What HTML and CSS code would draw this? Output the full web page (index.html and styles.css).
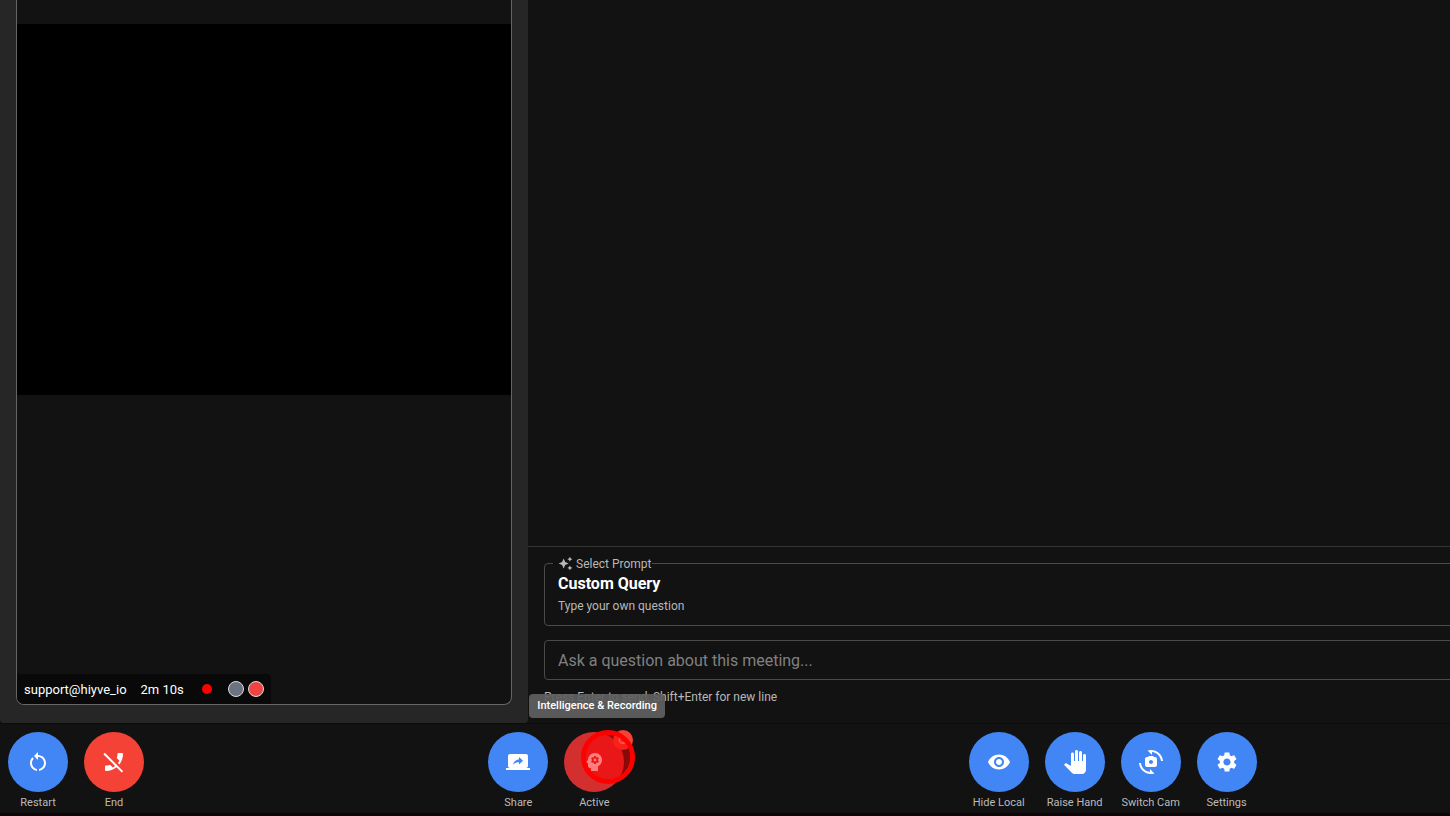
FILE: index.html
```html
<!DOCTYPE html>
<html lang="en">
<head>
  <meta charset="UTF-8" />
  <meta name="viewport" content="width=device-width, initial-scale=1.0"/>
  <title>Meeting</title>
  <link rel="stylesheet" href="styles.css">
</head>
<body>

<div class="room">
  <main class="stage">
    <section class="video-pane">
      <div class="tile">
        <div class="video"></div>
        <div class="tile-info">
          <span>support@hiyve_io</span>
          <span class="elapsed">2m 10s</span>
          <span class="rec-dot"></span>
          <span class="status muted"></span>
          <span class="status live"></span>
        </div>
      </div>
    </section>

    <section class="assistant">
      <div class="answers"></div>
      <form class="query">
        <fieldset class="prompt">
          <legend class="prompt-label">
            <svg viewBox="0 0 24 24"><path d="m19 9 1.25-2.75L23 5l-2.75-1.25L19 1l-1.25 2.75L15 5l2.75 1.25zm-7.5.5L9 4 6.5 9.5 1 12l5.5 2.5L9 20l2.5-5.5L17 12zM19 15l-1.25 2.75L15 19l2.75 1.25L19 23l1.25-2.75L23 19l-2.75-1.25z"/></svg>
            <span>Select Prompt</span>
          </legend>
          <button type="button" class="prompt-select" aria-haspopup="listbox">
            <span class="prompt-name">Custom Query</span>
            <span class="prompt-hint">Type your own question</span>
          </button>
        </fieldset>
        <input class="question" type="text" placeholder="Ask a question about this meeting..." aria-label="Ask a question about this meeting">
        <p class="help">Press Enter to send, Shift+Enter for new line</p>
      </form>
    </section>
  </main>

  <footer class="toolbar">
    <div class="group">
      <div class="control">
        <button type="button" class="round" id="restart" aria-labelledby="restart-label">
          <svg viewBox="0 0 24 24"><path d="M12 5V2L8 6l4 4V7c3.31 0 6 2.69 6 6 0 2.97-2.17 5.43-5 5.91v2.02c3.95-.49 7-3.85 7-7.93 0-4.42-3.58-8-8-8m-6 8c0-1.65.67-3.15 1.76-4.24L6.34 7.34C4.9 8.79 4 10.79 4 13c0 4.08 3.05 7.44 7 7.93v-2.02c-2.83-.48-5-2.94-5-5.91"/></svg>
        </button>
        <label id="restart-label" for="restart">Restart</label>
      </div>
      <div class="control">
        <button type="button" class="round end" id="end" aria-labelledby="end-label">
          <svg viewBox="0 0 24 24"><path d="M17.34 14.54l-1.43-1.43c.56-.73 1.05-1.5 1.47-2.32l-2.2-2.2c-.28-.28-.36-.67-.25-1.02.37-1.12.57-2.32.57-3.57 0-.55.45-1 1-1H20c.55 0 1 .45 1 1 0 3.98-1.37 7.64-3.66 10.54m-2.82 2.81C11.63 19.64 7.97 21 4 21c-.55 0-1-.45-1-1v-3.49c0-.55.45-1 1-1 1.24 0 2.45-.2 3.57-.57.35-.12.75-.03 1.02.24l2.2 2.2c.81-.42 1.58-.9 2.3-1.46L1.39 4.22l1.42-1.41L21.19 21.2l-1.41 1.41z"/></svg>
        </button>
        <label id="end-label" for="end">End</label>
      </div>
    </div>

    <div class="group">
      <div class="control">
        <button type="button" class="round" id="share" aria-labelledby="share-label">
          <svg viewBox="0 0 24 24"><path d="M20 18c1.1 0 1.99-.9 1.99-2L22 6c0-1.11-.9-2-2-2H4c-1.11 0-2 .89-2 2v10c0 1.1.89 2 2 2H0v2h24v-2zm-7-3.53v-2.19c-2.78 0-4.61.85-6 2.72.56-2.67 2.11-5.33 6-5.87V7l4 3.73z"/></svg>
        </button>
        <label id="share-label" for="share">Share</label>
      </div>
      <div class="control">
        <button type="button" class="round active" id="active" aria-labelledby="active-label" aria-describedby="active-tip">
          <svg viewBox="0 0 24 24"><path d="M13 8.57c-.79 0-1.43.64-1.43 1.43s.64 1.43 1.43 1.43 1.43-.64 1.43-1.43-.64-1.43-1.43-1.43"/><path d="M13 3C9.25 3 6.2 5.94 6.02 9.64L4.1 12.2c-.25.33-.01.8.4.8H6v3c0 1.1.9 2 2 2h1v3h7v-4.68c2.36-1.12 4-3.53 4-6.32 0-3.87-3.13-7-7-7m3 7c0 .13-.01.26-.02.39l.83.66c.08.06.1.16.05.25l-.8 1.39c-.05.09-.16.12-.24.09l-.99-.4c-.21.16-.43.29-.67.39L14 13.83c-.01.1-.1.17-.2.17h-1.6c-.1 0-.18-.07-.2-.17l-.15-1.06c-.25-.1-.47-.23-.68-.39l-.99.4c-.09.03-.2 0-.25-.09l-.8-1.39c-.05-.08-.03-.19.05-.25l.84-.66c-.01-.13-.02-.26-.02-.39s.02-.27.04-.39l-.85-.66c-.08-.06-.1-.16-.05-.26l.8-1.38c.05-.09.15-.12.24-.09l1 .4c.2-.15.43-.29.67-.39L12 6.17c.02-.1.1-.17.2-.17h1.6c.1 0 .18.07.2.17l.15 1.06c.24.1.46.23.67.39l1-.4c.09-.03.2 0 .24.09l.8 1.38c.05.09.03.2-.05.26l-.85.66c.03.12.04.25.04.39"/></svg>
        </button>
        <label id="active-label" for="active">Active</label>
        <span class="badge">
          <svg viewBox="0 0 24 24"><path d="M4 8a8.500 8.500 0 1 0 16 2h-3a5.500 5.500 0 1 1-10.500-1zM13 8h6v3h-6z"/></svg>
        </span>
        <span class="click-ring"></span>
        <span class="tooltip" id="active-tip" role="tooltip">Intelligence &amp; Recording</span>
      </div>
    </div>

    <div class="group">
      <div class="control">
        <button type="button" class="round" id="hide" aria-labelledby="hide-label">
          <svg viewBox="0 0 24 24"><path d="M12 4.5C7 4.5 2.73 7.61 1 12c1.73 4.39 6 7.5 11 7.5s9.27-3.11 11-7.5c-1.73-4.39-6-7.5-11-7.5M12 17c-2.76 0-5-2.24-5-5s2.24-5 5-5 5 2.24 5 5-2.24 5-5 5m0-8c-1.66 0-3 1.34-3 3s1.34 3 3 3 3-1.34 3-3-1.34-3-3-3"/></svg>
        </button>
        <label id="hide-label" for="hide">Hide Local</label>
      </div>
      <div class="control">
        <button type="button" class="round" id="hand" aria-labelledby="hand-label">
          <svg viewBox="0 0 24 24"><path d="M23 5.5V20c0 2.2-1.8 4-4 4h-7.3c-1.08 0-2.1-.43-2.85-1.19L1 14.83s1.26-1.23 1.3-1.25c.22-.19.49-.29.79-.29.22 0 .42.06.6.16.04.01 4.31 2.46 4.31 2.46V4c0-.83.67-1.5 1.5-1.5S11 3.17 11 4v7h1V1.5c0-.83.67-1.5 1.5-1.5S15 .67 15 1.5V11h1V2.5c0-.83.67-1.5 1.5-1.5s1.5.67 1.5 1.5V11h1V5.5c0-.83.67-1.5 1.5-1.5s1.5.67 1.5 1.5"/></svg>
        </button>
        <label id="hand-label" for="hand">Raise Hand</label>
      </div>
      <div class="control">
        <button type="button" class="round" id="switch" aria-labelledby="switch-label">
          <svg viewBox="0 0 24 24"><path d="M16 7h-1l-1-1h-4L9 7H8c-1.1 0-2 .9-2 2v6c0 1.1.9 2 2 2h8c1.1 0 2-.9 2-2V9c0-1.1-.9-2-2-2m-4 7c-1.1 0-2-.9-2-2s.9-2 2-2 2 .9 2 2-.9 2-2 2"/><path d="m8.57.51 4.48 4.48V2.04c4.72.47 8.48 4.23 8.95 8.95h2C23.34 3.02 15.49-1.59 8.57.51m2.38 21.45c-4.72-.47-8.48-4.23-8.95-8.95H0c.66 7.97 8.51 12.58 15.43 10.48l-4.48-4.48z"/></svg>
        </button>
        <label id="switch-label" for="switch">Switch Cam</label>
      </div>
      <div class="control">
        <button type="button" class="round" id="settings" aria-labelledby="settings-label">
          <svg viewBox="0 0 24 24"><path d="M19.14 12.94c.04-.3.06-.61.06-.94 0-.32-.02-.64-.07-.94l2.03-1.58c.18-.14.23-.41.12-.61l-1.92-3.32c-.12-.22-.37-.29-.59-.22l-2.39.96c-.5-.38-1.03-.7-1.62-.94l-.36-2.54c-.04-.24-.24-.41-.48-.41h-3.84c-.24 0-.43.17-.47.41l-.36 2.54c-.59.24-1.13.57-1.62.94l-2.39-.96c-.22-.08-.47 0-.59.22L2.74 8.87c-.12.21-.08.47.12.61l2.03 1.58c-.05.3-.09.63-.09.94s.02.64.07.94l-2.03 1.58c-.18.14-.23.41-.12.61l1.92 3.32c.12.22.37.29.59.22l2.39-.96c.5.38 1.03.7 1.62.94l.36 2.54c.05.24.24.41.48.41h3.84c.24 0 .44-.17.47-.41l.36-2.54c.59-.24 1.13-.56 1.62-.94l2.39.96c.22.08.47 0 .59-.22l1.92-3.32c.12-.22.07-.47-.12-.61zM12 15.6c-1.98 0-3.6-1.62-3.6-3.6s1.62-3.6 3.6-3.6 3.6 1.62 3.6 3.6-1.62 3.6-3.6 3.6"/></svg>
        </button>
        <label id="settings-label" for="settings">Settings</label>
      </div>
    </div>
  </footer>
</div>

</body>
</html>
```

FILE: styles.css
```css
* {
  box-sizing: border-box;
}

body {
  margin: 0;
  font-family: Roboto, "Liberation Sans", sans-serif;
  font-size: 13px;
  color: #fff;
  background: #121212;
}

button,
input {
  font: inherit;
  color: inherit;
}

svg {
  fill: currentColor;
}

.room {
  display: flex;
  flex-direction: column;
  height: 100vh;
  overflow: hidden;
}

.stage {
  flex: 1;
  display: flex;
  min-height: 0;
}

/* Video side */
.video-pane {
  flex: 0 0 528px;
  display: flex;
  padding: 0 16px 18px;
  background: #262626;
  border-radius: 0 0 4px 4px;
}

.tile {
  flex: 1;
  display: flex;
  flex-direction: column;
  justify-content: space-between;
  padding-top: 24px;
  border: 1px solid #666;
  border-top: none;
  border-radius: 0 0 8px 8px;
  background: #121212;
  overflow: hidden;
}

.video {
  aspect-ratio: 4 / 3;
  background: #000;
}

.tile-info {
  align-self: flex-start;
  display: flex;
  align-items: center;
  height: 30px;
  padding: 0 7px;
  background: #090909;
  border-top-right-radius: 4px;
}

.elapsed {
  margin-left: 14px;
}

.rec-dot {
  width: 10px;
  height: 10px;
  margin: 0 16px 0 18px;
  border-radius: 50%;
  background: #f00;
}

.status {
  width: 16px;
  height: 16px;
  border: 1px solid #ddd;
  border-radius: 50%;
}

.status + .status {
  margin-left: 4px;
}

.muted {
  background: #6b7280;
}

.live {
  background: #ef4444;
}

/* Assistant side */
.assistant {
  flex: 1;
  display: flex;
  flex-direction: column;
  min-width: 0;
  overflow: hidden;
}

.answers {
  flex: 1;
}

.query {
  margin-right: -32px;
  padding: 9px 16px 18px;
  border-top: 1px solid #333;
  color: #b8b8b8;
}

.prompt {
  margin: 0;
  padding: 1px 13px 9px;
  border: 1px solid #4a4a4a;
  border-radius: 4px;
}

.prompt-label {
  display: flex;
  align-items: center;
  gap: 3px;
  margin-left: -5px;
  padding: 0 0 0 5px;
  font-size: 12px;
  line-height: 14px;
}

.prompt-label svg {
  width: 15px;
  height: 15px;
}

.prompt-select {
  display: flex;
  flex-direction: column;
  width: 100%;
  padding: 0;
  border: none;
  background: none;
  text-align: left;
  cursor: pointer;
}

.prompt-name {
  font-size: 16px;
  font-weight: bold;
  line-height: 24px;
  color: #fff;
}

.prompt-hint {
  font-size: 12px;
  line-height: 20px;
}

.question {
  display: block;
  width: 100%;
  height: 40px;
  margin-top: 14px;
  padding: 0 13px;
  border: 1px solid #4a4a4a;
  border-radius: 4px;
  background: transparent;
  font-size: 16px;
}

.question::placeholder {
  color: #808080;
  opacity: 1;
}

.help {
  margin: 9px 0 0;
  font-size: 12px;
  line-height: 16px;
}

/* Bottom bar */
.toolbar {
  display: grid;
  grid-template-columns: repeat(3, 1fr);
  padding: 9px 1px 2px 8px;
  border-bottom: 3px solid #0c0609;
  box-shadow: inset 0 1px #0c0c0c;
}

.group {
  display: flex;
  gap: 16px;
}

.control {
  position: relative;
  display: flex;
  flex-direction: column;
  align-items: center;
  gap: 3px;
  width: 60px;
}

.control label {
  font-size: 11px;
  line-height: 16px;
  white-space: nowrap;
  color: #bbb;
}

.round {
  display: flex;
  align-items: center;
  justify-content: center;
  width: 60px;
  height: 60px;
  padding: 0;
  border: none;
  border-radius: 50%;
  background: #4285f4;
  cursor: pointer;
}

.round svg {
  width: 24px;
  height: 24px;
}

.end {
  background: #f44336;
}

.active {
  background: #d32f2f;
}

.badge {
  position: absolute;
  top: -2px;
  right: -9px;
  display: flex;
  align-items: center;
  justify-content: center;
  width: 20px;
  height: 20px;
  border-radius: 50%;
  background: #f44336;
}

.badge svg {
  width: 12px;
  height: 12px;
  opacity: 0.6;
}

.click-ring {
  position: absolute;
  top: -2px;
  left: 17px;
  width: 54px;
  height: 54px;
  border: 5px solid #f00;
  border-radius: 50%;
  background: rgba(255, 0, 0, 0.5);
  background-clip: padding-box;
  pointer-events: none;
}

.tooltip {
  position: absolute;
  bottom: 93px;
  left: -35px;
  padding: 4px 8px;
  border-radius: 4px;
  background: rgba(97, 97, 97, 0.92);
  font-size: 11px;
  font-weight: 500;
  line-height: 16px;
  white-space: nowrap;
}
```
